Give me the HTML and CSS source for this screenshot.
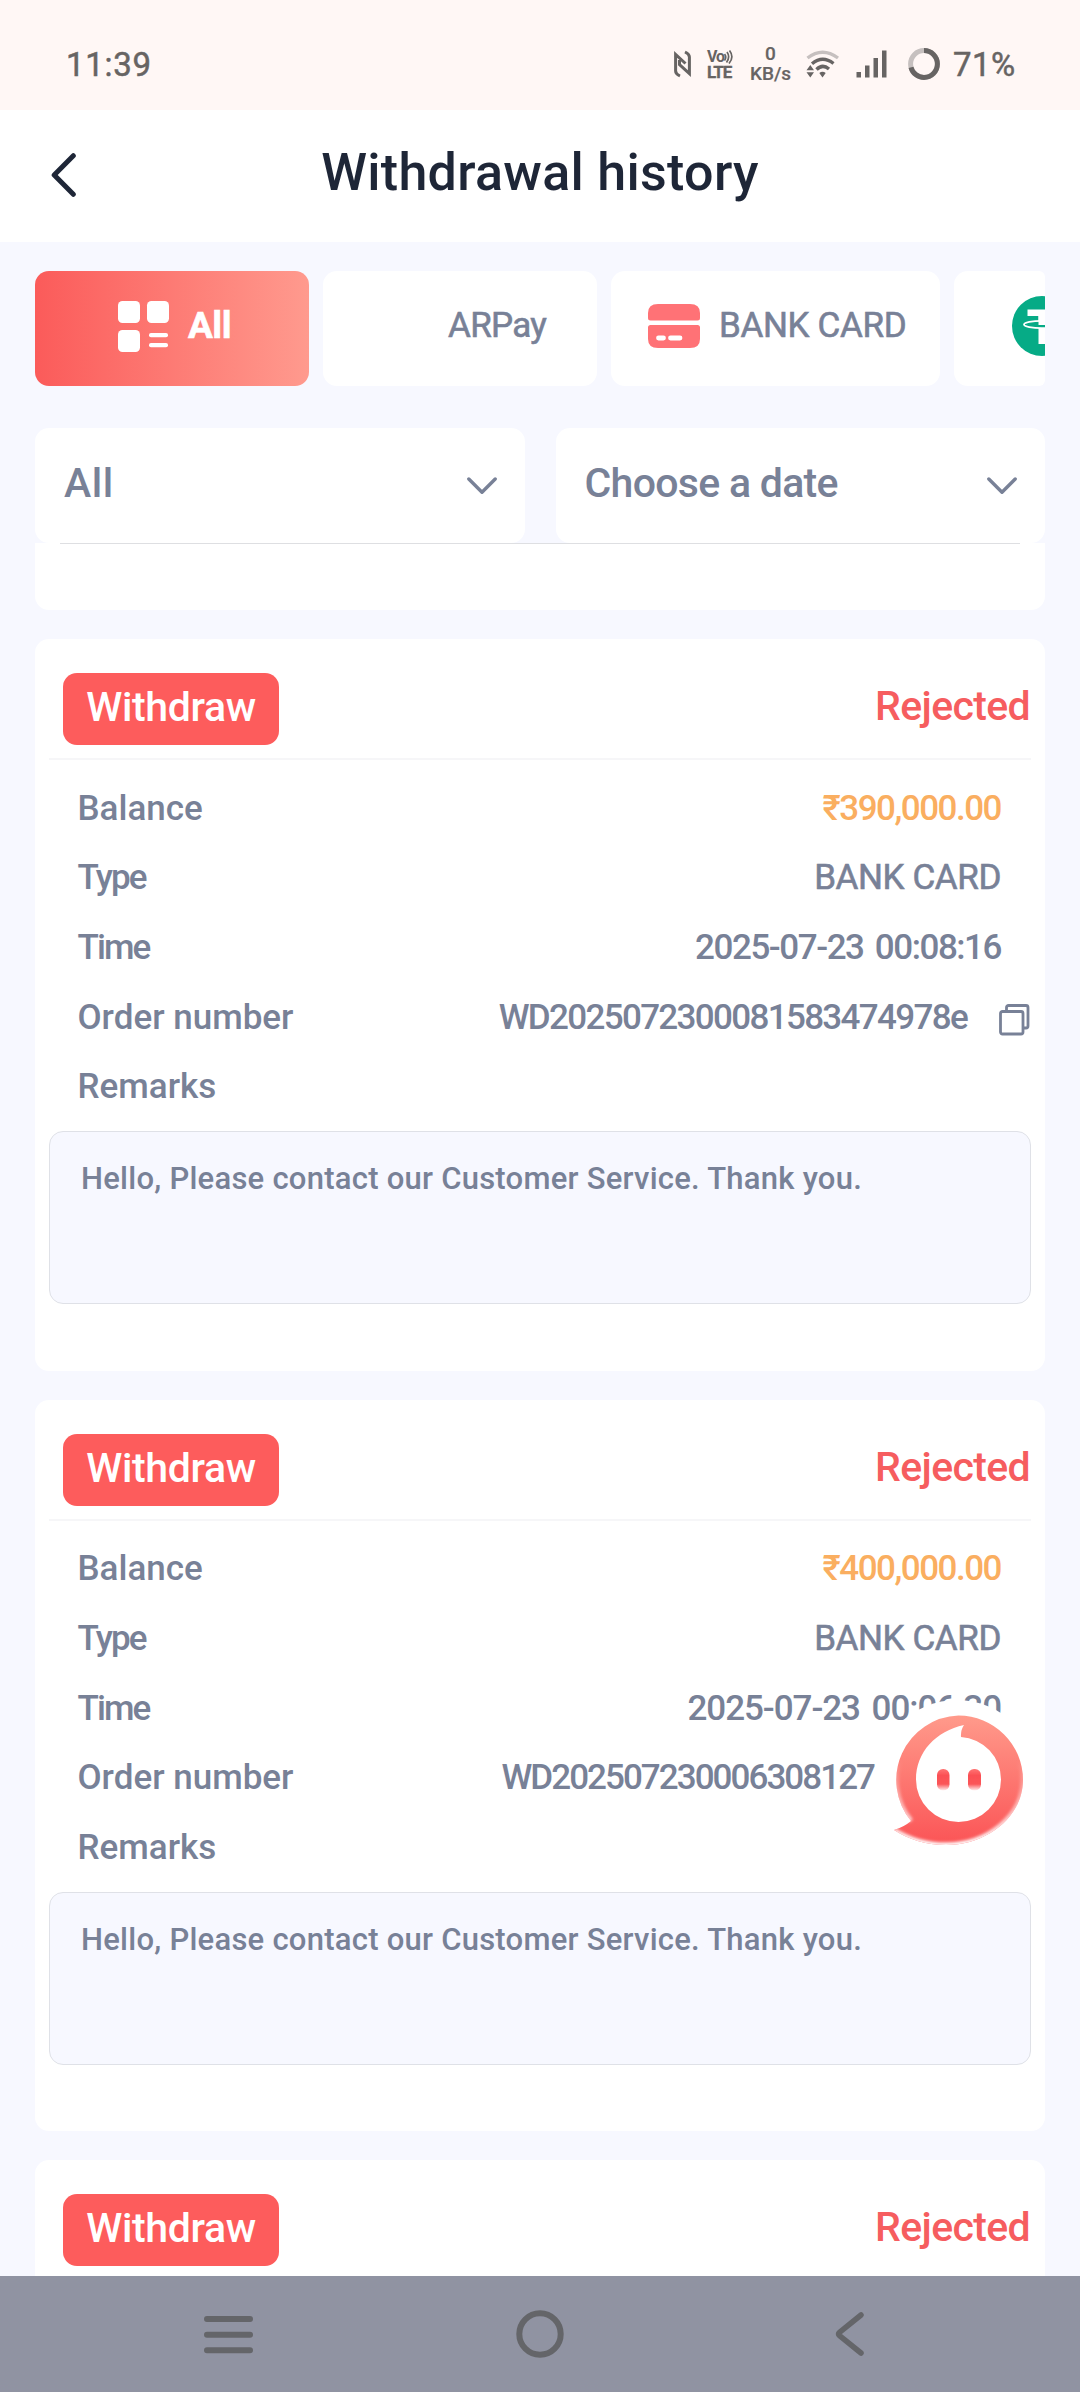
FILE: index.html
```html
<!DOCTYPE html>
<html lang="en">
<head>
<meta charset="utf-8">
<title>Withdrawal history</title>
<link rel="stylesheet" href="styles.css">
</head>
<body>
<svg class="defs" width="0" height="0" aria-hidden="true">
  <symbol id="copy" viewBox="0 0 31 32">
    <path d="M7.500 6V3.500a2 2 0 0 1 2-2h17.500a2 2 0 0 1 2 2v18.500a2 2 0 0 1-2 2H25" fill="none" stroke="currentColor" stroke-width="2.800"/>
    <rect x="1.500" y="7.500" width="22.500" height="22.500" rx="2" fill="none" stroke="currentColor" stroke-width="2.800"/>
  </symbol>
  <symbol id="chevron" viewBox="0 0 30 18">
    <path d="M1.800 2L15 15.200L28.200 2" fill="none" stroke="currentColor" stroke-width="3.400" stroke-linecap="round" stroke-linejoin="round"/>
  </symbol>
</svg>

<div class="status">
  <span class="clock">11:39</span>
  <div class="indicators">
    <svg class="nfc" viewBox="0 0 17 28"><path d="M6 26Q1.600 24 1.600 21V4.500L11.500 13.500M11 2Q15.400 4 15.400 7V23.500L5.500 14.500V10" fill="none" stroke="currentColor" stroke-width="3"/></svg>
    <div class="volte">
      <span class="vo">Vo<svg viewBox="0 0 9 14"><path d="M.5 4Q3 7 .5 10.500M3 2Q6.500 7 2.500 12.500M5.500 .5Q10.500 7 5 13.500" fill="none" stroke="currentColor" stroke-width="1.700"/></svg></span>
      <span class="lte">LTE</span>
    </div>
    <div class="speed"><span>0</span><span>KB/s</span></div>
    <svg class="wifi" viewBox="0 0 34 28">
      <path d="M1.500 8Q16.500-3.500 32 8" fill="none" stroke="#c6c0bf" stroke-width="3.400"/>
      <path d="M6 13.800Q16.500 5 27.500 13.500M10.500 19.500Q16.500 13.500 23 19" fill="none" stroke="currentColor" stroke-width="3.400"/>
      <path d="M13.300 23Q16.500 20.500 19.700 23L16.500 27.500ZM.5 20.200L4.300 15L8 20.200ZM.5 22.300H8L4.300 27.500Z" fill="currentColor"/>
    </svg>
    <svg class="signal" viewBox="0 0 31 28"><path d="M.5 22H5V27.500H.5ZM9 15.500H13.500V27.500H9ZM17.500 8H22V27.500H17.500ZM26 .5H30.500V27.500H26Z" fill="currentColor"/></svg>
    <svg class="ring" viewBox="0 0 32 32"><g fill="none" stroke-width="5" transform="rotate(-90 16 16)"><circle cx="16" cy="16" r="13.400" stroke="#c6c0bf"/><circle cx="16" cy="16" r="13.400" stroke="#676463" pathLength="100" stroke-dasharray="71 29"/></g></svg>
    <span class="percent">71%</span>
  </div>
</div>

<header class="header">
  <svg class="back" viewBox="0 0 25 44"><path d="M22.300 2.700L3.200 22L22.300 41.300" fill="none" stroke="currentColor" stroke-width="5" stroke-linecap="round" stroke-linejoin="round"/></svg>
  <h1>Withdrawal history</h1>
</header>

<div class="controls">
  <nav class="tabs">
    <div class="tab active">
      <svg class="tab-icon" viewBox="0 0 51 51" fill="#fff"><rect width="22" height="22" rx="4.500"/><rect x="29" width="22" height="22" rx="4.500"/><rect y="29" width="22" height="22" rx="4.500"/><rect x="31" y="32" width="19" height="4.200" rx="2"/><rect x="31" y="42" width="19" height="4.200" rx="2"/></svg>
      <span>All</span>
    </div>
    <div class="tab plain"><span>ARPay</span></div>
    <div class="tab bank">
      <svg class="bank-icon" viewBox="0 0 52 44"><path d="M0 16.500V9Q0 0 10 0H42Q52 0 52 9V14Q52 16.500 49.500 16.500H2.500Q0 16.500 0 14ZM2.500 21H49.500Q52 21 52 23.500V35Q52 44 42 44H10Q0 44 0 35V23.500Q0 21 2.500 21Z" fill="#ff7276"/><path d="M10.500 34H15.500M22.500 34H32" stroke="#fff" stroke-width="4.800" stroke-linecap="round"/></svg>
      <span>BANK CARD</span>
    </div>
    <div class="tab coin">
      <svg class="coin-icon" viewBox="0 0 60 60"><circle cx="30" cy="30" r="30" fill="#06ab86"/><path d="M15.500 13.500H44.500V20H33.500V48H26.500V20H15.500Z" fill="#fff"/><ellipse cx="30" cy="28.500" rx="18" ry="3.700" fill="#06ab86" stroke="#fff" stroke-width="1.800"/><path d="M26.500 18H33.500V29H26.500Z" fill="#fff"/></svg>
    </div>
  </nav>
  <div class="filters">
    <div class="select"><span class="short">All</span><svg class="chevron"><use href="#chevron"/></svg></div>
    <div class="select"><span>Choose a date</span><svg class="chevron"><use href="#chevron"/></svg></div>
  </div>
</div>

<main class="list">
  <section class="card tail"></section>

  <section class="card">
    <div class="card-head"><span class="badge">Withdraw</span><span class="state">Rejected</span></div>
    <div class="row"><span>Balance</span><span class="amount">₹390,000.00</span></div>
    <div class="row"><span class="tight">Type</span><span class="type">BANK CARD</span></div>
    <div class="row"><span class="tight">Time</span><span class="time">2025-07-23 00:08:16</span></div>
    <div class="row order"><span>Order number</span><span class="number">WD2025072300081583474978e</span><svg class="copy"><use href="#copy"/></svg></div>
    <div class="row"><span>Remarks</span></div>
    <p class="remark">Hello, Please contact our Customer Service. Thank you.</p>
  </section>

  <section class="card">
    <div class="card-head"><span class="badge">Withdraw</span><span class="state">Rejected</span></div>
    <div class="row"><span>Balance</span><span class="amount">₹400,000.00</span></div>
    <div class="row"><span class="tight">Type</span><span class="type">BANK CARD</span></div>
    <div class="row"><span class="tight">Time</span><span class="time wide">2025-07-23 00:06:30</span></div>
    <div class="row order"><span>Order number</span><span class="number covered">WD202507230006308127</span><svg class="copy"><use href="#copy"/></svg></div>
    <div class="row"><span>Remarks</span></div>
    <p class="remark">Hello, Please contact our Customer Service. Thank you.</p>
  </section>

  <section class="card">
    <div class="card-head"><span class="badge">Withdraw</span><span class="state">Rejected</span></div>
  </section>
</main>

<footer class="navbar">
  <svg class="menu" viewBox="0 0 49 38"><path d="M3 3H46M3 18.700H46M3 34.300H46" stroke="currentColor" stroke-width="6" stroke-linecap="round"/></svg>
  <svg class="home" viewBox="0 0 48 48"><circle cx="24" cy="24" r="20.700" fill="none" stroke="currentColor" stroke-width="6"/></svg>
  <svg class="prev" viewBox="0 0 29 44"><path d="M26 3L4.500 20.300Q2.500 22 4.500 23.700L26 41" fill="none" stroke="currentColor" stroke-width="5.500" stroke-linecap="round"/></svg>
</footer>

<svg class="chat" viewBox="0 0 162 162">
  <defs>
    <linearGradient id="bubble" x1="0" y1="0" x2="0" y2="1"><stop offset="0" stop-color="#ff9a8b"/><stop offset="1" stop-color="#fb5456"/></linearGradient>
    <linearGradient id="eye" x1="0" y1="0" x2="0" y2="1"><stop offset="0" stop-color="#ff7574"/><stop offset=".3" stop-color="#fb5054"/><stop offset=".7" stop-color="#fb5458"/><stop offset="1" stop-color="#fff0f0"/></linearGradient>
    <linearGradient id="rim" gradientUnits="userSpaceOnUse" x1="0" y1="60" x2="0" y2="144"><stop offset="0" stop-color="#fff" stop-opacity="0"/><stop offset="1" stop-color="#fff"/></linearGradient>
    <filter id="soft" x="-20%" y="-20%" width="140%" height="140%"><feGaussianBlur stdDeviation="1.600"/></filter>
    <filter id="soft-eye" x="-30%" y="-30%" width="160%" height="160%"><feGaussianBlur stdDeviation=".7"/></filter>
    <path id="shape" d="M18 130Q28 127 35 121A64.500 64.500 0 0 1 82.500 15.500A64.500 64.500 0 0 1 147 80C147 116 112 145 70 145C50 145 32 139 18 130Z"/>
    <clipPath id="inside"><use href="#shape"/></clipPath>
  </defs>
  <circle cx="81" cy="81" r="81" fill="#fff"/>
  <use href="#shape" fill="url(#bubble)"/>
  <g clip-path="url(#inside)"><path d="M35 121A64.500 64.500 0 0 1 82.500 15.500A64.500 64.500 0 0 1 147 80C147 116 112 145 70 145C50 145 32 139 18 130" fill="none" stroke="url(#rim)" stroke-width="5" filter="url(#soft)"/></g>
  <path d="M88 25C60 31 40 52 40 79.500A42.500 42.500 0 0 0 125 79.500A42.500 42.500 0 0 0 85 37Q84.500 30 88 25Z" fill="#fff"/>
  <g fill="url(#eye)" filter="url(#soft-eye)"><rect x="61" y="69" width="12.500" height="21.500" rx="6"/><rect x="92" y="69" width="13" height="21.500" rx="6"/></g>
</svg>
</body>
</html>
```
FILE: styles.css
```css
* { box-sizing: border-box; }

body {
  margin: 0;
  height: 2392px;
  display: flex;
  flex-direction: column;
  background: #f7f8ff;
  color: #788197;
  font-family: Roboto, sans-serif;
  font-weight: 500;
  overflow: hidden;
  position: relative;
}

svg { display: block; flex: none; }
.defs { position: absolute; }
span { white-space: nowrap; }

/* Status bar */
.status {
  height: 110px;
  flex: none;
  display: flex;
  align-items: center;
  justify-content: space-between;
  padding: 18px 64px 0 66px;
  background: #fff7f5;
  color: #676463;
}
.clock { font-size: 33px; font-weight: 400; letter-spacing: .7px; -webkit-text-stroke: .5px; }
.indicators { display: flex; align-items: center; }
.nfc { width: 17px; height: 28px; margin-right: 16px; }
.volte { width: 27px; display: flex; flex-direction: column; margin-right: 16px; font-weight: 700; }
.vo { display: flex; align-items: center; height: 15px; line-height: 15px; font-size: 16px; letter-spacing: -1px; }
.vo svg { width: 9px; height: 14px; }
.lte { height: 15px; line-height: 16px; font-size: 17px; letter-spacing: -1px; -webkit-text-stroke: .3px; }
.speed { width: 41px; margin-right: 15px; display: flex; flex-direction: column; align-items: center; font-size: 19px; line-height: 20px; -webkit-text-stroke: .2px; }
.wifi { width: 34px; height: 28px; margin-right: 16px; }
.signal { width: 31px; height: 28px; margin-right: 21px; }
.ring { width: 32px; height: 32px; margin-right: 13px; }
.percent { width: 63px; font-size: 33px; font-weight: 400; letter-spacing: .4px; -webkit-text-stroke: .5px; }

/* Title bar */
.header {
  height: 132px;
  flex: none;
  display: grid;
  grid-template-columns: 120px 1fr 120px;
  align-items: center;
  background: #fff;
  color: #1e2637;
}
.back { width: 25px; height: 44px; margin: 0 0 3px 51px; }
.header h1 {
  margin: 0 0 6px;
  font-size: 52px;
  font-weight: 500;
  line-height: 60px;
  letter-spacing: .3px;
  text-align: center;
}

/* Tabs and filters */
.controls { flex: none; padding: 29px 35px 0; }
.tabs {
  display: flex;
  gap: 14px;
  height: 115px;
  overflow: hidden;
  border-radius: 0 6px 6px 0;
}
.tab {
  flex: none;
  display: flex;
  align-items: center;
  padding-bottom: 5px;
  border-radius: 14px;
  background: #fff;
  font-size: 35px;
  font-weight: 400;
}
.tab span { padding-bottom: 2px; -webkit-text-stroke: .6px; }
.tab.active {
  width: 274px;
  padding-left: 83px;
  gap: 19px;
  background: linear-gradient(90deg, #fb5b5a, #ff9a8e);
  color: #fff;
  font-size: 37px;
  font-weight: 700;
  letter-spacing: -.5px;
}
.tab-icon { width: 51px; height: 51px; }
.tab.plain { width: 274px; padding-left: 125px; letter-spacing: -.7px; }
.tab.bank { width: 329px; padding-left: 37px; gap: 19px; letter-spacing: -.35px; }
.bank-icon { width: 52px; height: 44px; }
.tab.coin { width: 274px; padding-left: 58px; }
.coin-icon { width: 60px; height: 60px; }

.filters { display: grid; grid-template-columns: 1fr 1fr; gap: 31px; margin-top: 42px; }
.select {
  height: 115px;
  display: flex;
  align-items: center;
  justify-content: space-between;
  padding: 0 28px 0 29px;
  border-radius: 14px;
  background: #fff;
  font-size: 41px;
  letter-spacing: -.7px;
}
.select span { padding-bottom: 6px; }
.select .short { letter-spacing: .6px; }
.chevron { width: 30px; height: 18px; }

/* Records */
.list {
  flex: 1;
  min-height: 0;
  overflow: hidden;
  display: flex;
  flex-direction: column;
  gap: 29px;
  padding: 0 35px;
}
.card {
  flex: none;
  height: 731.5px;
  padding: 34px 14px 0;
  border-radius: 14px;
  background: #fff;
}
.card.tail { height: 67px; padding: 0 25px; border-radius: 0 0 14px 14px; }
.card.tail::before { content: ""; display: block; height: 1px; background: #dedfe2; }
.card-head {
  height: 87px;
  display: flex;
  justify-content: space-between;
  padding-left: 14px;
  border-bottom: 2px solid #f6f6f8;
  font-size: 41px;
}
.badge {
  width: 216px;
  height: 72px;
  line-height: 69px;
  border-radius: 14px;
  background: #fd5c5c;
  color: #fff;
  text-align: center;
  letter-spacing: -.35px;
}
.state { line-height: 67px; color: #f65d5f; letter-spacing: -.65px; padding-right: 1px; }
.row {
  height: 69.7px;
  display: flex;
  align-items: center;
  justify-content: space-between;
  padding: 0 30px 0 28.5px;
  font-size: 35px;
}
.card-head + .row { margin-top: 13.300px; }
.tight { letter-spacing: -1.9px; }
.amount { color: #faae60; letter-spacing: -1.5px; }
.type { font-weight: 400; letter-spacing: -.4px; -webkit-text-stroke: .6px; }
.time { letter-spacing: -1.45px; word-spacing: 4px; }
.time.wide { letter-spacing: -1.05px; }
.row.order { padding-right: 1px; }
.number { margin-left: auto; letter-spacing: -1.67px; padding-right: 1px; }
.number.covered { letter-spacing: -1.96px; margin-right: 93px; }
.copy { width: 31px; height: 32px; margin: 6px 0 0 31px; }
.remark {
  height: 173px;
  margin: 9.700px 0 0;
  padding: 26px 31px;
  border: 1px solid #dfe1e7;
  border-radius: 14px;
  background: #f7f8ff;
  font-size: 31px;
  line-height: 42px;
  letter-spacing: .25px;
}

/* System navigation */
.navbar {
  height: 116px;
  flex: none;
  display: grid;
  grid-template-columns: 1fr 48px 1fr;
  align-items: center;
  padding: 0 216px 0 204px;
  column-gap: 0;
  background: #9093a2;
  color: #646569;
}
.navbar { grid-template-columns: 312px 48px 1fr; }
.menu { width: 49px; height: 38px; margin-top: 2px; }
.home { width: 48px; height: 48px; }
.prev { width: 29px; height: 44px; justify-self: end; }

/* Floating support button */
.chat { position: absolute; left: 876px; top: 1700px; width: 162px; height: 162px; }
```
